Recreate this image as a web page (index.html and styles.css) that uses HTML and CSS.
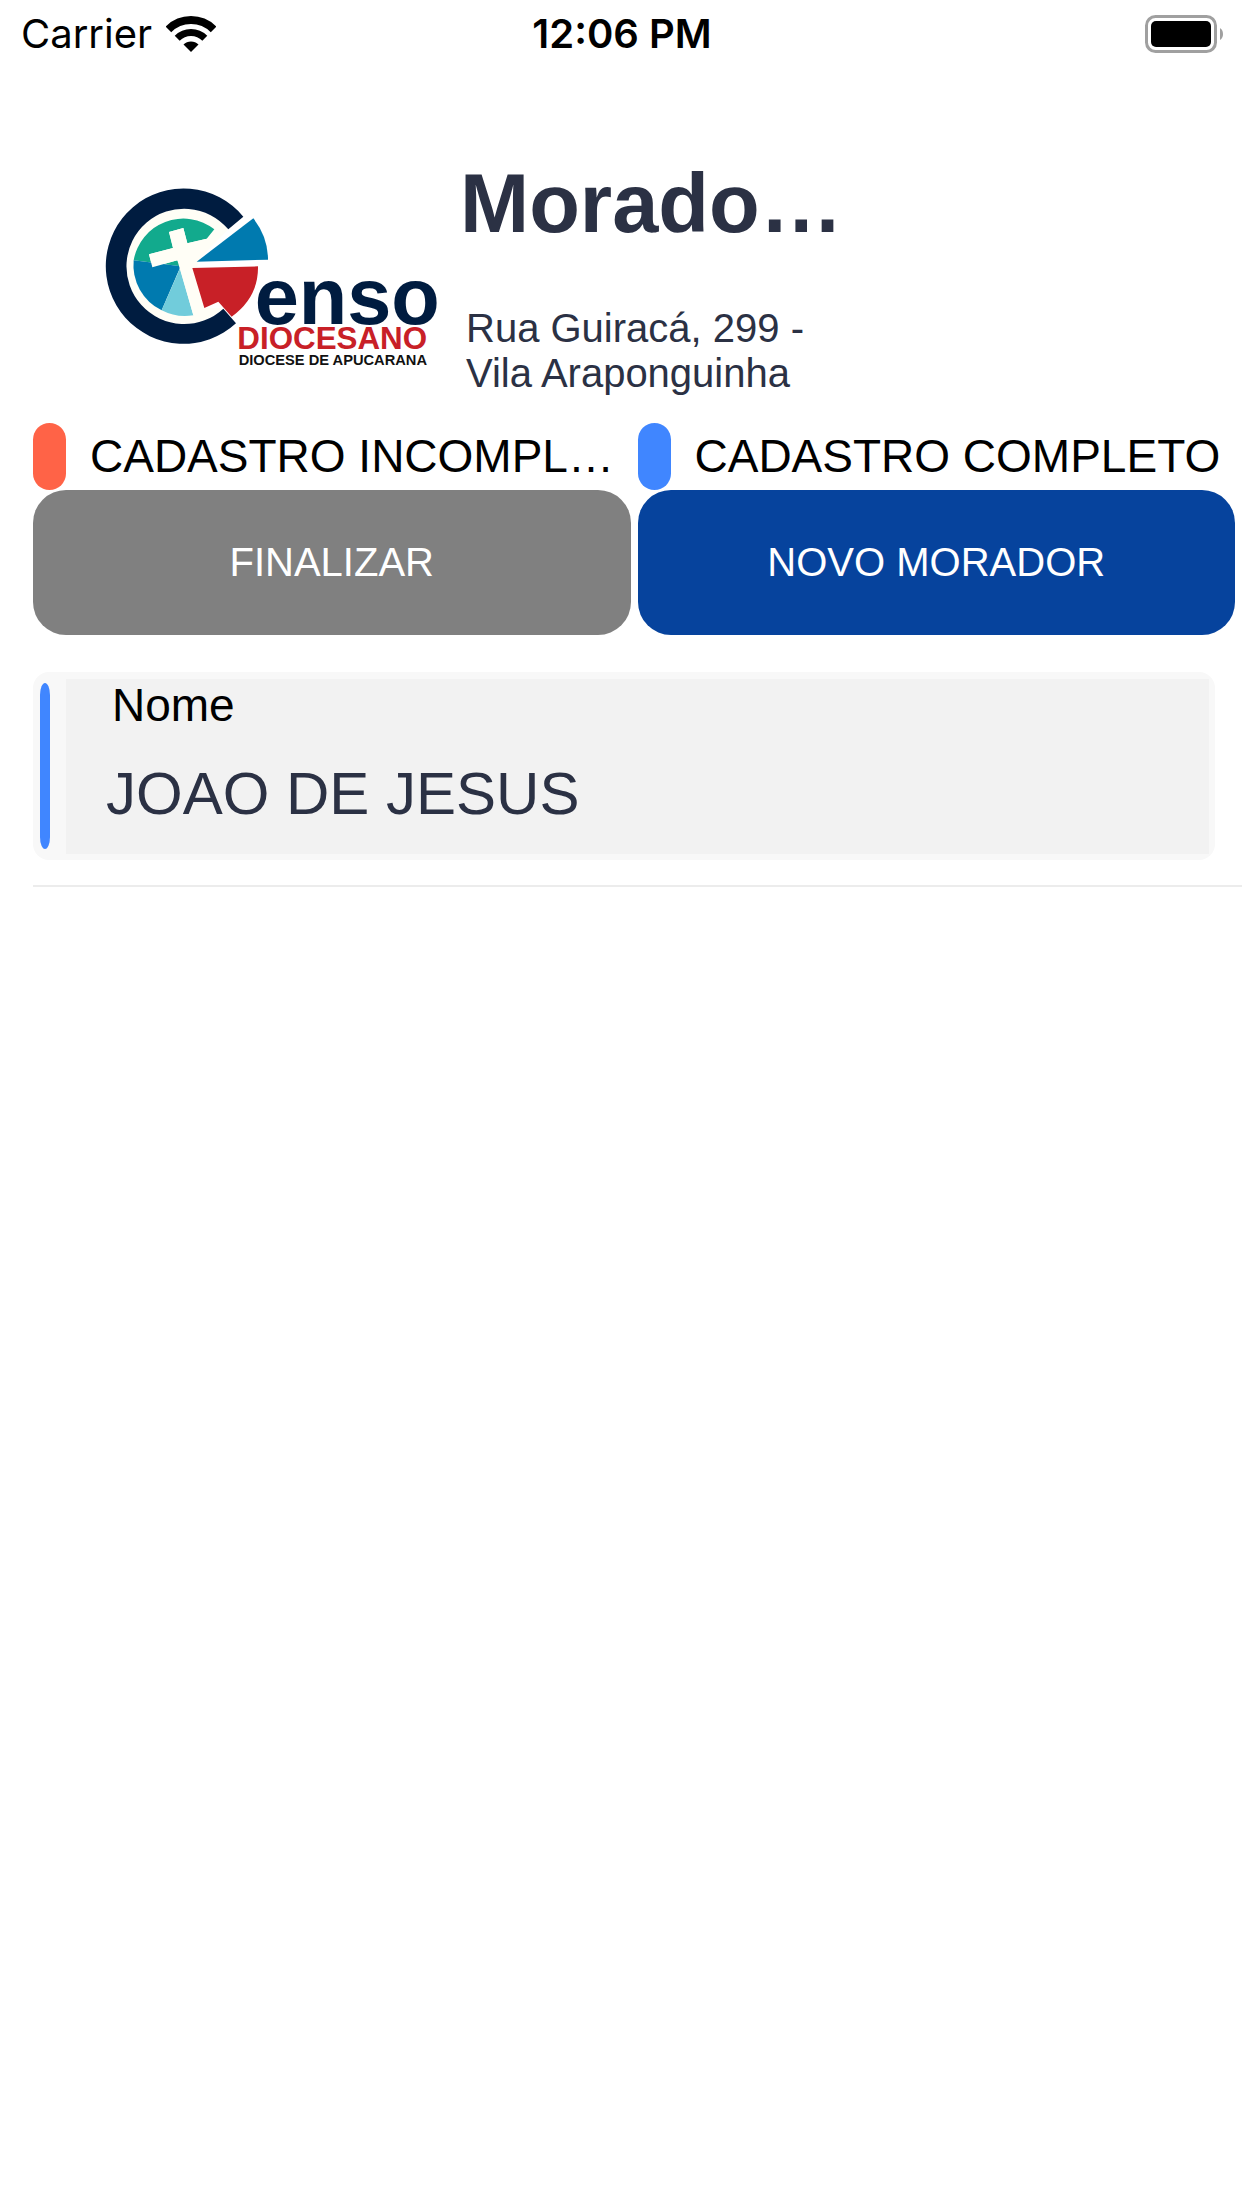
FILE: index.html
```html
<!DOCTYPE html>
<html lang="pt-BR">
<head>
  <meta charset="UTF-8">
  <meta name="viewport" content="width=device-width, initial-scale=1">
  <title>Moradores</title>
  <link rel="stylesheet" href="styles.css">
</head>
<body>

  <div class="status-bar">
    <div class="carrier">
      <span>Carrier</span>
      <svg class="wifi" viewBox="0 0 50 38" aria-hidden="true">
        <path d="M2.4 14.4A32 32 0 0 1 47.6 14.4" fill="none" stroke="#000" stroke-width="8"/>
        <path d="M11.2 23.2A19.5 19.5 0 0 1 38.8 23.2" fill="none" stroke="#000" stroke-width="7"/>
        <path d="M17.5 29.5A10.6 10.6 0 0 1 32.5 29.5L25 37Z"/>
      </svg>
    </div>
    <time class="clock">12:06 PM</time>
    <svg class="battery" viewBox="0 0 78 38" aria-hidden="true">
      <rect x="1.5" y="1.5" width="69" height="35" rx="9" fill="#fff" stroke="#a0a0a0" stroke-width="3"/>
      <rect x="6" y="6" width="60" height="26" rx="5"/>
      <path d="M75 13Q78 15 78 19T75 25Z" fill="#a0a0a0"/>
    </svg>
  </div>

  <header class="header">
    <svg class="logo" viewBox="0 0 1080 630" role="img" aria-label="Censo Diocesano">
      <path fill="#fffef6" d="M415 175A173 173 0 1 0 400 412L343 411L307 291L320 272Z"/>
      <path fill="#001c40" d="M460 137A233 233 0 1 0 438 457L400 413A173 173 0 1 1 415 175Z"/>
      <path fill="#12aa8d" d="M131 268A151 151 0 0 1 373 175L350 203L292 217L280 171L237 183L249 231L177 250L187 289L262 268L272 286Z"/>
      <path fill="#007aaf" d="M131 268L272 286L215 418A151 151 0 0 1 131 268Z"/>
      <path fill="#71ccdb" d="M270 292L215 418A151 151 0 0 0 310 433Z"/>
      <path fill="#fffef6" d="M237 183L280 171L292 217L350 203L320 290L307 291L343 411L310 433L262 268L187 289L177 250L249 231Z"/>
      <path fill="#007aaf" d="M320 272L490 142Q534 198 534 266Z"/>
      <path fill="#c82027" d="M307 291L504 286Q506 378 425 437L385 392L343 411Z"/>
      <text class="logo-censo" x="494" y="458">enso</text>
      <text class="logo-diocesano" x="442" y="535">DIOCESANO</text>
      <text class="logo-diocese" x="446" y="583">DIOCESE DE APUCARANA</text>
    </svg>
    <div class="heading">
      <h1>Moradores</h1>
      <p>Rua Guiracá, 299 - Vila Araponguinha</p>
    </div>
  </header>

  <main>
    <div class="columns">
      <div class="legend"><span class="pill incomplete"></span><span class="legend-text">CADASTRO INCOMPLETO</span></div>
      <div class="legend"><span class="pill complete"></span><span class="legend-text">CADASTRO COMPLETO</span></div>
      <button type="button" class="finish">FINALIZAR</button>
      <button type="button" class="new">NOVO MORADOR</button>
    </div>

    <ul class="residents">
      <li>
        <div class="card">
          <span class="marker"></span>
          <div class="details">
            <div class="label">Nome</div>
            <div class="name">JOAO DE JESUS</div>
          </div>
        </div>
      </li>
    </ul>
  </main>

</body>
</html>
```
FILE: styles.css
```css
* { box-sizing: border-box; }
body { margin: 0; background: #fff; color: #000; font-family: "Liberation Sans", Arial, sans-serif; }

.status-bar { display: grid; grid-template-columns: 1fr auto 1fr; align-items: center; height: 67px; padding: 0 19px 0 21px; font-family: Inter, sans-serif; font-size: 40px; }
.carrier { display: flex; align-items: center; gap: 14px; }
.wifi { width: 50px; height: 38px; }
.clock { font-weight: 600; }
.battery { width: 78px; height: 38px; justify-self: end; }

.header { display: flex; align-items: center; padding: 89px 33px 27px 90px; }
.logo { flex: none; width: 360px; height: 210px; }
.logo text { font-weight: bold; }
.logo-censo { font-size: 238px; fill: #001c40; }
.logo-diocesano { font-size: 94px; fill: #c82027; }
.logo-diocese { font-size: 44px; fill: #111; }
.heading { width: 394px; padding-left: 10px; color: #2b3144; }
h1 { margin: 0 0 54px; font-size: 83px; line-height: 96px; white-space: nowrap; overflow: hidden; text-overflow: ellipsis; }
p { margin: 0; padding-left: 6px; font-size: 40px; line-height: 45px; }

.columns { display: grid; grid-template-columns: 1fr 1fr; column-gap: 7px; padding: 0 7px 0 33px; }
.legend { display: flex; align-items: center; gap: 24px; height: 67px; min-width: 0; }
.pill { flex: none; width: 33px; height: 67px; border-radius: 17px; }
.incomplete { background: #ff6347; }
.complete { background: #4086ff; }
.legend-text { font-size: 46px; line-height: 67px; white-space: nowrap; overflow: hidden; text-overflow: ellipsis; }
button { height: 145px; padding: 0; border: none; border-radius: 33px; color: #fff; font-family: inherit; font-size: 40px; cursor: pointer; }
.finish { background: #808080; }
.new { background: #06439d; }

.residents { margin: 37px 0 0 33px; padding: 0; list-style: none; }
.residents li { padding: 0 27px 25px 0; border-bottom: 2px solid #ececec; }
.card { display: flex; padding: 7px 6px 6px 7px; border-radius: 16px; background: #f8f8f8; }
.marker { flex: none; width: 10px; margin: 4px 16px 5px 0; border-radius: 5px / 12px; background: #4086ff; }
.details { flex: 1; min-width: 0; padding: 0 40px 24px; background: #f2f2f2; }
.label { padding-left: 6px; font-size: 46px; line-height: 53px; }
.name { margin-top: 26px; color: #2b3144; font-size: 60px; line-height: 72px; }
```
